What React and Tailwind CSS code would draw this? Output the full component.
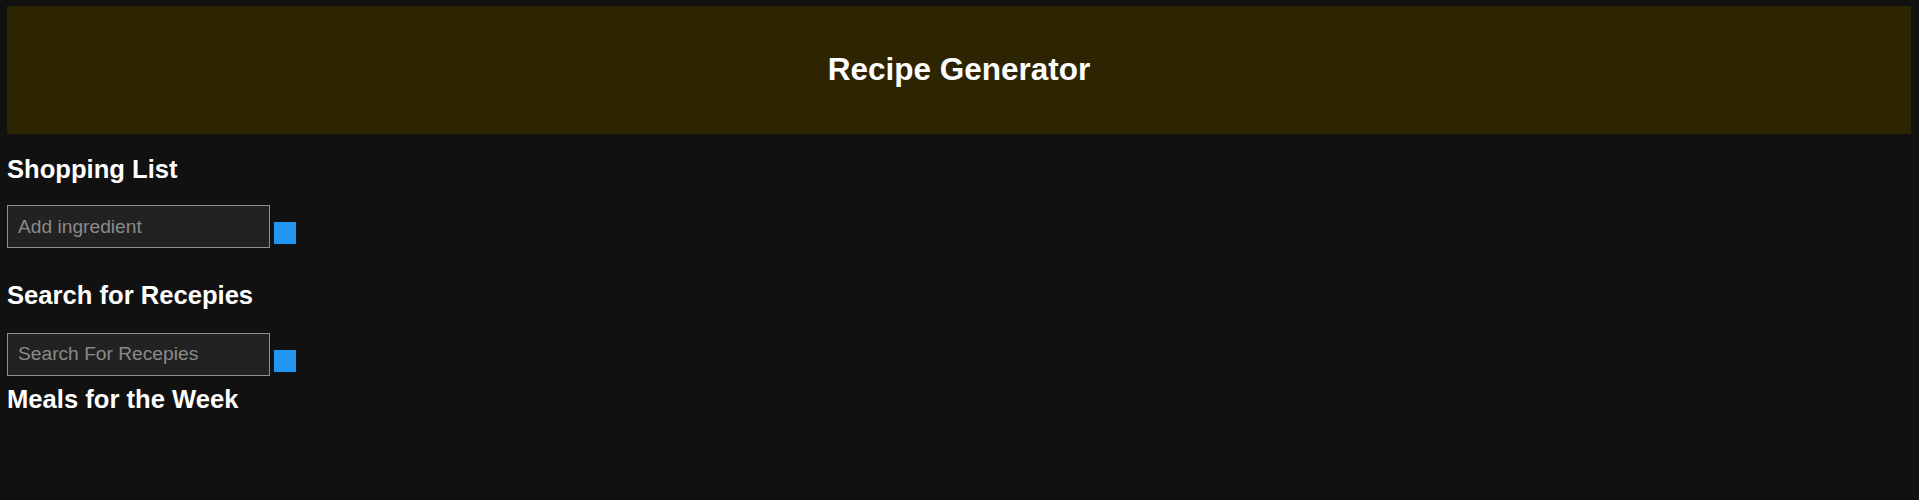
import React, { useState } from "react";

const RecipeGenerator = () => {
  const [ingredient, setIngredient] = useState("");
  const [query, setQuery] = useState("");

  return (
    <div
      className="min-h-[500px] bg-[#111111] pt-[6px] pl-[7px] pr-[8px] text-white"
      style={{ fontFamily: '"Liberation Sans", Arial, sans-serif' }}
    >
      {/* Header */}
      <header className="h-[128px] bg-[#2d2501] flex items-center justify-center pb-[2px]">
        <h1 className="text-[31.5px] font-bold leading-[1.15]">Recipe Generator</h1>
      </header>

      {/* Shopping List */}
      <h2 className="mt-[21px] text-[25.6px] font-bold leading-[1.15]">Shopping List</h2>
      <div className="mt-[21px] flex items-end gap-[4px]">
        <input
          type="text"
          placeholder="Add ingredient"
          value={ingredient}
          onChange={(e) => setIngredient(e.target.value)}
          className="w-[263px] h-[43px] px-[10px] bg-[#222222] border border-[#8f8f8f] text-[19.2px] text-white placeholder:text-[#8a8a8a] outline-none"
        />
        <button className="w-[22px] h-[22px] mb-[4px] bg-[#2196f3]" />
      </div>

      {/* Search */}
      <h2 className="mt-[33px] text-[25.6px] font-bold leading-[1.15]">Search for Recepies</h2>
      <div className="mt-[22px] flex items-end gap-[4px]">
        <input
          type="text"
          placeholder="Search For Recepies"
          value={query}
          onChange={(e) => setQuery(e.target.value)}
          className="w-[263px] h-[43px] px-[10px] bg-[#222222] border border-[#8f8f8f] text-[19.2px] text-white placeholder:text-[#8a8a8a] outline-none"
        />
        <button className="w-[22px] h-[22px] mb-[4px] bg-[#2196f3]" />
      </div>

      {/* Meals */}
      <h2 className="mt-[9px] text-[25.6px] font-bold leading-[1.15]">Meals for the Week</h2>
    </div>
  );
};

export default RecipeGenerator;
